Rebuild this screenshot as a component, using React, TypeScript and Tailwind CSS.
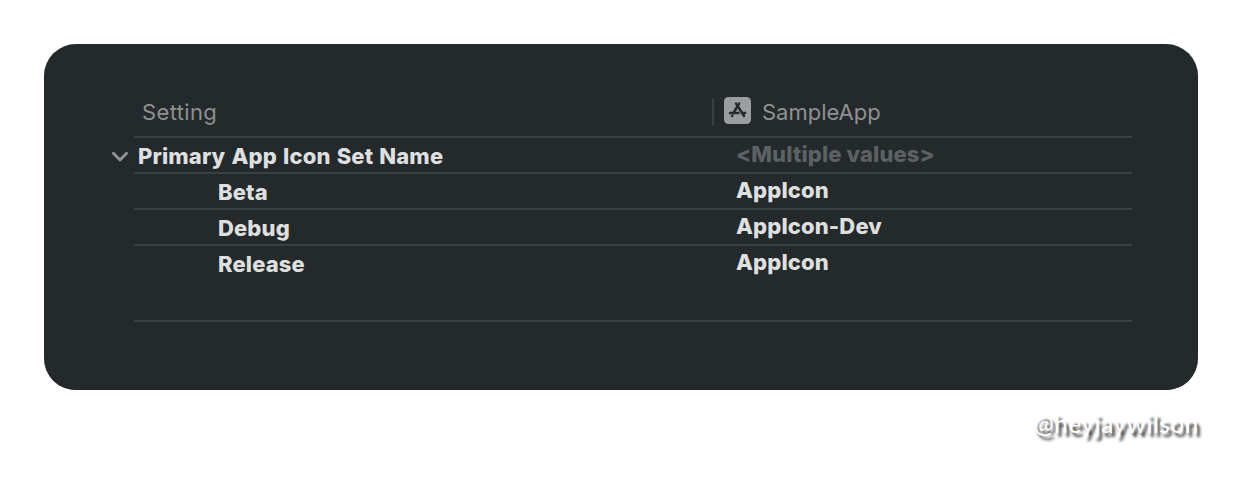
import React from 'react';

const rows = [
  { name: 'Beta', value: 'AppIcon' },
  { name: 'Debug', value: 'AppIcon-Dev' },
  { name: 'Release', value: 'AppIcon' },
];

function AppStoreIcon() {
  return (
    <svg width="27" height="27" viewBox="0 0 27 27" className="shrink-0">
      <rect width="27" height="27" rx="4.5" fill="#9b9d9e" />
      <g fill="none" stroke="#24292b" strokeWidth="2.4" strokeLinecap="round">
        <path d="M15.2 6.5 10 15" />
        <path d="M12 6.5 20 19" />
        <path d="M6 16H14.5M18.3 16H21.2" />
        <path d="M8.4 18.4 8 19" />
      </g>
    </svg>
  );
}

export default function App() {
  return (
    <div className="h-[484px] w-[1242px] overflow-hidden bg-white p-[44px] font-['Inter',sans-serif] text-[22px]">
      <main className="h-[346px] w-[1154px] rounded-[32px] bg-[#24292b] pt-[48px] pr-[66px] pl-[66px] shadow-[inset_0_-1px_0_#29202d]">
        <header className="ml-[24px] flex h-[46px] items-start border-b-2 border-[#3a3f42] text-[#8f9191]">
          <span className="w-[578px] pt-[4px] pl-[8px] leading-[32px]">
            <span className="tracking-[0.35px]">Setting</span>
          </span>
          <div className="mt-[6px] h-[28px] w-[2px] bg-[#3a3f42]" />
          <div className="mt-[5px] ml-[10px]"><AppStoreIcon /></div>
          <span className="pt-[4px] pl-[11px] leading-[32px]">SampleApp</span>
        </header>
        <section className="font-extrabold tracking-[0.13px] text-[#dedfdf]">
          <div className="flex">
            <svg width="24" height="36" viewBox="0 0 24 36" fill="none" className="shrink-0">
              <path d="M3.4 15.3 10 22 16.6 15.3" stroke="#929596" strokeWidth="2.8" strokeLinecap="round" strokeLinejoin="round" />
            </svg>
            <div className="flex h-[36px] flex-1 border-b-2 border-[#3a3f42] leading-[36px]">
              <span className="w-[602px] pl-[4px] [word-spacing:1.2px]">Primary App Icon Set Name</span>
              <span className="-mt-[2px] text-[#5c6163]">&lt;Multiple values&gt;</span>
            </div>
          </div>
          {rows.map((row, i) => (
            <div
              key={row.name}
              className={`ml-[24px] flex border-b-2 border-[#3a3f42] leading-[36px] ${i === 2 ? 'h-[76px]' : 'h-[36px]'}`}
            >
              <span className="w-[602px] pl-[84px]">{row.name}</span>
              <span className="-mt-[2px]">{row.value}</span>
            </div>
          ))}
        </section>
      </main>
      <footer className="mt-[22px] flex justify-end font-['Lato',sans-serif] text-[24px] font-medium leading-[28px] tracking-[0.7px] text-white [text-shadow:3px_4px_3px_rgba(0,0,0,0.8)]">
        <span className="-mt-[2px] -mr-[1px]">@heyjaywilson</span>
      </footer>
    </div>
  );
}
